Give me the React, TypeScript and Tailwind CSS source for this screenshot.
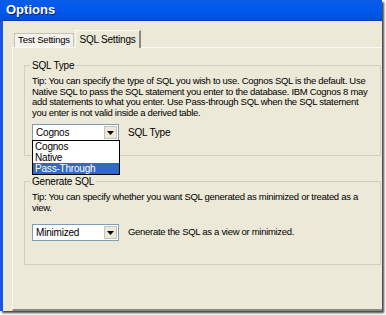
import React from "react";

const font = { fontFamily: '"Liberation Sans", Arial, sans-serif' };

function Combo({ value }: { value: string }) {
  return (
    <div className="flex h-[17px] w-[87px] items-center border border-[#7f9db9] bg-white pl-[3px]">
      <span className="flex-1 text-[10px] leading-none tracking-[-0.2px] text-black">{value}</span>
      <div className="mr-[1px] flex h-[13px] w-[13px] items-center justify-center border border-[#c3c3c3] bg-[#ece9d8]">
        <svg width="7" height="4" viewBox="0 0 7 4">
          <path d="M0 0h7L3.5 4z" fill="#000" />
        </svg>
      </div>
    </div>
  );
}

export default function App() {
  return (
    <div className="relative h-[315px] w-[386px] overflow-hidden bg-white" style={font}>
      <div className="flex h-[311px] w-[382px] flex-col shadow-[2px_2px_2px_#444]">
        <div className="flex h-[21px] items-center bg-gradient-to-b from-[#0a5ce8] via-[#0058ee] to-[#0050dc] pl-[6px] border-b border-[#0040b0]">
          <span className="text-[13px] font-bold text-white [text-shadow:1px_1px_0_#0a1e6a]">Options</span>
        </div>
        <div className="flex flex-1 flex-col border-l-[3px] border-[#1a56e6] bg-[#ece9d8] pl-[9px] pt-[9px]">
          <div className="flex h-[17px] items-end pl-[2px]">
            <div className="flex h-[14px] w-[60px] items-center justify-center whitespace-nowrap border border-b-0 border-[#c4c2b4] bg-[#f3f2ec] text-[9.5px] tracking-[-0.2px] text-black">
              Test Settings
            </div>
            <div className="relative z-10 mb-[-1px] ml-[1px] flex h-[18px] w-[66px] items-center justify-center whitespace-nowrap border-l border-t border-[#f8f8f4] border-r-2 border-r-[#8a8a80] bg-[#ece9d8] text-[10px] tracking-[-0.2px] text-black">
              SQL Settings
            </div>
          </div>
          <div className="flex-1 border-l border-t border-[#fafaf6] border-b-2 border-b-[#8a8a80] pl-[11px] pt-[12px] pr-[1px]">
            <fieldset className="relative min-w-0 border border-[#d0d0bf] px-[7px] pb-[14px] pt-[5px]">
              <legend className="ml-[-2px] px-[2px] text-[10px] leading-[11px] tracking-[-0.2px] text-black">SQL Type</legend>
              <div className="whitespace-nowrap text-[9.5px] leading-[10.5px] tracking-[-0.3px] text-black">
                <div>Tip: You can specify the type of SQL you wish to use. Cognos SQL is the default. Use</div>
                <div>Native SQL to pass the SQL statement you enter to the database. IBM Cognos 8 may</div>
                <div>add statements to what you enter. Use Pass-through SQL when the SQL statement</div>
                <div>you enter is not valid inside a derived table.</div>
              </div>
              <div className="relative mt-[6px] flex items-center gap-[9px]">
                <Combo value="Cognos" />
                <span className="text-[10px] tracking-[-0.2px] text-black">SQL Type</span>
                <div className="absolute left-0 top-[16px] z-20 w-[88px] border border-black bg-white text-[10px] leading-[11px] tracking-[-0.2px] text-black">
                  <div className="pl-[2px]">Cognos</div>
                  <div className="pl-[2px]">Native</div>
                  <div className="bg-[#316ac5] pl-[2px] text-white">Pass-Through</div>
                </div>
              </div>
            </fieldset>
            <fieldset className="mt-[20px] min-w-0 border border-[#d0d0bf] px-[7px] pb-[23px] pt-[5px]">
              <legend className="ml-[-2px] px-[2px] text-[10px] leading-[11px] tracking-[-0.2px] text-black">Generate SQL</legend>
              <div className="whitespace-nowrap text-[9.5px] leading-[10.5px] tracking-[-0.3px] text-black">
                <div>Tip: You can specify whether you want SQL generated as minimized or treated as a</div>
                <div>view.</div>
              </div>
              <div className="mt-[11px] flex items-center gap-[9px]">
                <Combo value="Minimized" />
                <span className="text-[9.5px] tracking-[-0.3px] text-black">Generate the SQL as a view or minimized.</span>
              </div>
            </fieldset>
          </div>
        </div>
      </div>
    </div>
  );
}
